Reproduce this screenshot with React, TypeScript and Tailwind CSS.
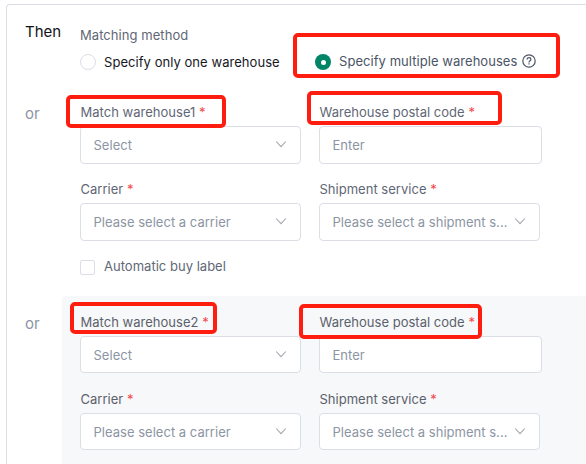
import type { ReactNode } from 'react';

const Chevron = () => (
  <svg viewBox="0 0 12 8" className="mb-0.5 h-2 w-3 shrink-0" fill="none" stroke="#a3a7ae" strokeWidth="1.1">
    <path d="M1.2 1.5 6 6.7l4.8-5.2" />
  </svg>
);

const HelpIcon = () => (
  <svg viewBox="0 0 14 14" className="mb-0.5 ml-[5px] size-3.5 shrink-0" fill="none" stroke="#4b5565" strokeWidth="1.2">
    <circle cx="7" cy="7" r="6.2" />
    <path d="M5.1 5.6C5.1 4.4 5.9 3.7 7 3.7s1.9.7 1.9 1.7c0 1.3-1.9 1.5-1.9 3" />
    <path d="M7 9.3v1.3" />
  </svg>
);

type FieldProps = {
  label: string;
  placeholder: string;
  select?: boolean;
  className: string;
};

const Field = ({ label, placeholder, select, className }: FieldProps) => (
  <div className={className}>
    <div className="h-5 whitespace-nowrap pl-[0.5px] leading-5 text-[#5f6776] group-data-[shaded=true]:text-[#5b616b]">
      {label} <span className="text-[#f5484b]">*</span>
    </div>
    <div className="mt-1 flex h-[38px] items-center justify-between rounded-[4px] border border-[#dcdee6] bg-white pl-[12.5px] pr-[13px] text-[#8c95a3] group-data-[shaded=true]:mb-px group-data-[shaded=true]:h-[37px]">
      <span className="whitespace-nowrap pt-0.5">{placeholder}</span>
      {select && <Chevron />}
    </div>
  </div>
);

type GroupProps = {
  index: number;
  shaded?: boolean;
  children?: ReactNode;
};

const WarehouseGroup = ({ index, shaded = false, children }: GroupProps) => (
  <section className="group flex h-[210px]" data-shaded={shaded}>
    <div className="w-[55px] shrink-0 pl-[18px] pt-4 text-[15px] leading-6 text-[#8c95a3]">or</div>
    <div className={`grow rounded-tl-[4px] pl-[18px] pt-4 ${shaded ? 'bg-[#f7f8fa]' : ''}`}>
      <div className="flex gap-[18px]">
        <Field label={`Match warehouse${index}`} placeholder="Select" select className="w-[221px]" />
        <Field label="Warehouse postal code" placeholder="Enter" className="w-[223px]" />
      </div>
      <div className="mt-[15px] flex gap-[18px]">
        <Field label="Carrier" placeholder="Please select a carrier" select className="w-[221px]" />
        <Field label="Shipment service" placeholder="Please select a shipment s..." select className="w-[221px]" />
      </div>
      {children}
    </div>
  </section>
);

// Hand-drawn style callouts laid over the form
const highlights = [
  'left-[293px] top-[33px] h-[45px] w-[267px]',
  'left-[66px] top-[95px] h-[33px] w-[160px]',
  'left-[307px] top-[91px] h-[34px] w-[195px]',
  'left-[70px] top-[302px] h-[32px] w-[147px]',
  'left-[299px] top-[304px] h-[35px] w-[183px]',
];

export default function App() {
  return (
    <div className="relative h-[464px] w-[586px] overflow-hidden bg-white pl-1.5 pt-1 font-['Inter',sans-serif] text-[13px] tracking-[0.02px]">
      <main className="h-[480px] rounded-tl-[4px] border-l border-t border-[#dcdee6]">
        <header className="flex h-[81px]">
          <div className="w-[73px] shrink-0 pl-[18px] pt-[15px] text-[15px] leading-6 text-[#111318]">Then</div>
          <div className="pt-5">
            <div className="h-5 leading-5 tracking-[0.06px] text-[#5f6776]">Matching method</div>
            <div className="mt-[7px] flex h-5 items-center whitespace-nowrap tracking-[0.05px]">
              <label className="flex w-[235px] items-center text-[#15181e]">
                <span className="mr-2 size-4 shrink-0 rounded-full border border-[#dcdee6]" />
                <span className="pt-px">Specify only one warehouse</span>
              </label>
              <label className="flex items-center text-[#4b5565]">
                <span className="mr-2 flex size-4 shrink-0 items-center justify-center rounded-full bg-[#008566]">
                  <span className="size-[5px] rounded-full bg-white" />
                </span>
                Specify multiple warehouses
                <HelpIcon />
              </label>
            </div>
          </div>
        </header>

        <WarehouseGroup index={1}>
          <label className="mt-4 flex h-5 items-center text-[#5f6776]">
            <span className="mr-[9px] size-[15px] rounded-[2px] border border-[#dcdee6]" />
            Automatic buy label
          </label>
        </WarehouseGroup>
        <WarehouseGroup index={2} shaded />
      </main>

      {highlights.map((box) => (
        <div key={box} className={`pointer-events-none absolute rounded-[5px] border-4 border-[#ff1d0f] ${box}`} />
      ))}
    </div>
  );
}
